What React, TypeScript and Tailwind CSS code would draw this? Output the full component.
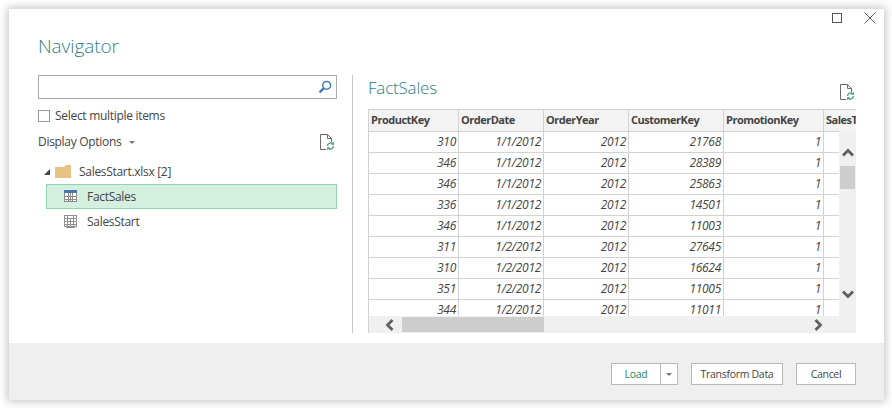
const rows = [
  ["310", "1/1/2012", "2012", "21768", "1"],
  ["346", "1/1/2012", "2012", "28389", "1"],
  ["346", "1/1/2012", "2012", "25863", "1"],
  ["336", "1/1/2012", "2012", "14501", "1"],
  ["346", "1/1/2012", "2012", "11003", "1"],
  ["311", "1/2/2012", "2012", "27645", "1"],
  ["310", "1/2/2012", "2012", "16624", "1"],
  ["351", "1/2/2012", "2012", "11005", "1"],
  ["344", "1/2/2012", "2012", "11011", "1"],
];
const headers = ["ProductKey", "OrderDate", "OrderYear", "CustomerKey", "PromotionKey", "SalesT"];
const widths = ["w-[90px]", "w-[85px]", "w-[85px]", "w-[95px]", "w-[100px]", "w-[40px]"];

function FileRefresh() {
  return (
    <svg width="15" height="17" viewBox="0 0 15 17" fill="none">
      <path d="M.5 15.5V.5H7.5L11.5 4.5V8M7.5.5V4.5H11.5M.5 15.5H6" stroke="#6a6a6a" />
      <path d="M7.5 12a3.2 3.2 0 0 1 5.5-2M13.5 12a3.2 3.2 0 0 1-5.5 2" stroke="#4aa57c" strokeWidth="1.4" />
      <path d="M14 7.8v3h-3zM7 16.2v-3h3z" fill="#4aa57c" />
    </svg>
  );
}

function TableIcon({ header }: { header: boolean }) {
  const c = header ? "#8a8a8a" : "#909090";
  return (
    <svg width="15" height="14" viewBox="0 0 15 14" fill="none">
      <rect x="1.5" y=".5" width="12" height="11" stroke={c} fill={header ? "#fff" : "none"} />
      {header && <rect x="1" y="0" width="13" height="3" fill="#4a76ac" />}
      {!header && <path d="M1.5 3.5h12M4.5 .5v11M10.5 .5v11M3 12.5h9" stroke={c} />}
      <path d="M1.5 6.5h12M1.5 9.5h12M7.5 3v8.5" stroke={c} />
      {header && <path d="M5.5 3v8.5M9.5 3v8.5" stroke={c} />}
    </svg>
  );
}

function Chevron({ d }: { d: string }) {
  return (
    <svg width="14" height="14" viewBox="0 0 14 14" fill="none">
      <path d={d} stroke="#606060" strokeWidth="2.8" />
    </svg>
  );
}

export default function App() {
  return (
    <div className="w-[892px] h-[408px] bg-white pt-[9px] pl-[9px] font-['Open_Sans','Noto_Sans',sans-serif] text-[#444] overflow-hidden">
      <div className="w-[875px] h-[391px] bg-white flex flex-col shadow-[0_0_8px_2px_rgba(0,0,0,0.22)]">
        <div className="h-[20px] flex justify-end items-center gap-[22px] pr-[8px] pb-[2px]">
          <div className="w-[10px] h-[10px] border border-[#555]" />
          <svg width="12" height="12" viewBox="0 0 12 12" fill="none">
            <path d="M.5.5l11 11M11.5.5l-11 11" stroke="#666" />
          </svg>
        </div>
        <div className="flex-1 flex min-h-0">
          <div className="w-[343px] pl-[29px] shrink-0">
            <div className="text-[19px] leading-[26px] font-light text-[#2f7f88] h-[46px] pt-[4px] tracking-[-0.1px]">Navigator</div>
            <div className="w-[299px] h-[24px] border border-[#aaa] flex items-center justify-end pr-[4px]">
              <svg width="14" height="14" viewBox="0 0 14 14" fill="none">
                <circle cx="8.7" cy="5.3" r="3.9" stroke="#3f7cb8" strokeWidth="1.5" />
                <path d="M5.8 8.2L1.5 12.5" stroke="#3f7cb8" strokeWidth="2.4" />
              </svg>
            </div>
            <div className="flex items-center h-[17px] mt-[8px] gap-[5px] text-[12px] tracking-[-0.3px]">
              <div className="w-[12px] h-[12px] border border-[#999]" />
              <span>Select multiple items</span>
            </div>
            <div className="flex items-center justify-between w-[299px] h-[24px] mt-[6px] text-[12px] tracking-[-0.3px]">
              <div className="flex items-center gap-[8px]">
                <span>Display Options</span>
                <div className="w-0 h-0 border-x-[3px] border-x-transparent border-t-[3px] border-t-[#777]" />
              </div>
              <div className="pr-[2px]"><FileRefresh /></div>
            </div>
            <div className="flex items-center h-[25px] mt-[5px] pl-[6px] text-[12px] tracking-[-0.3px]">
              <div className="w-0 h-0 border-l-[6px] border-l-transparent border-b-[6px] border-b-[#444] mr-[5px]" />
              <svg width="16" height="13" viewBox="0 0 16 13" className="mr-[8px]">
                <path d="M0 2h9l2-2h5v13H0z" fill="#e8c282" />
              </svg>
              <span>SalesStart.xlsx [2]</span>
            </div>
            <div className="w-[291px] ml-[8px] h-[25px] bg-[#d3efe0] border border-[#93d5ae] flex items-center pl-[16px] gap-[9px] text-[12px] tracking-[-0.3px]">
              <TableIcon header />
              <span>FactSales</span>
            </div>
            <div className="ml-[8px] h-[25px] flex items-center pl-[17px] gap-[9px] text-[12px] tracking-[-0.3px]">
              <TableIcon header={false} />
              <span>SalesStart</span>
            </div>
          </div>
          <div className="flex flex-col mt-[46px] mb-[10px]">
            <div className="w-px flex-1 bg-[#c8c8c8]" />
          </div>
          <div className="flex-1 pl-[15px] pr-[28px] flex flex-col min-h-0">
            <div className="h-[80px] flex justify-between items-start pr-[1px]">
              <span className="text-[17px] leading-[24px] font-light text-[#2f7f88] tracking-[-0.2px] mt-[47px]">FactSales</span>
              <div className="mt-[55px]"><FileRefresh /></div>
            </div>
            <div className="relative w-[488px] h-[224px] overflow-hidden text-[12px] border-t border-l border-[#d2d2d2]">
              <div className="flex h-[22px] bg-[#f3f3f3] border-b border-[#d2d2d2] font-bold text-[11px] tracking-[-0.5px]">
                {headers.map((h, i) => (
                  <div key={h} className={`${widths[i]} shrink-0 border-r border-[#d2d2d2] pl-[2px] leading-[20px] whitespace-nowrap overflow-hidden`}>{h}</div>
                ))}
              </div>
              {rows.map((r, ri) => (
                <div key={ri} className="flex h-[21px] border-b border-[#d2d2d2] italic tracking-[-0.3px]">
                  {r.map((c, i) => (
                    <div key={i} className={`${widths[i]} shrink-0 border-r border-[#d2d2d2] pr-[2px] text-right leading-[20px]`}>{c}</div>
                  ))}
                </div>
              ))}
              <div className="absolute right-0 top-[21px] bottom-[17px] w-[17px] bg-[#f0f0f0] flex flex-col items-center pt-[15px]">
                <Chevron d="M2 9.5l5-5 5 5" />
                <div className="w-[15px] h-[23px] bg-[#cdcdcd] mt-[6px]" />
                <div className="flex-1" />
                <div className="pb-[15px]"><Chevron d="M2 4.5l5 5 5-5" /></div>
              </div>
              <div className="absolute left-0 right-0 bottom-0 h-[17px] bg-[#f0f0f0] flex items-center">
                <div className="w-[33px] flex justify-center pl-[8px]"><Chevron d="M9.5 2l-5 5 5 5" /></div>
                <div className="w-[142px] h-[15px] bg-[#cdcdcd]" />
                <div className="flex-1" />
                <div className="pr-[31px]"><Chevron d="M4.5 2l5 5-5 5" /></div>
              </div>
            </div>
          </div>
        </div>
        <div className="h-[57px] bg-[#efefef] flex items-start justify-end gap-[13px] pt-[20px] pr-[28px] text-[10.5px] tracking-[-0.3px]">
          <div className="flex h-[22px] bg-white border border-[#b8b8b8]">
            <div className="w-[48px] flex items-center justify-center pt-[1px] text-[#2a7f60]">Load</div>
            <div className="w-[17px] border-l border-[#b8b8b8] flex items-center justify-center">
              <div className="w-0 h-0 border-x-[3px] border-x-transparent border-t-[3px] border-t-[#777]" />
            </div>
          </div>
          <div className="h-[22px] w-[92px] bg-white border border-[#b8b8b8] flex items-center justify-center pt-[1px]">Transform Data</div>
          <div className="h-[22px] w-[60px] bg-white border border-[#b8b8b8] flex items-center justify-center pt-[1px]">Cancel</div>
        </div>
      </div>
    </div>
  );
}
